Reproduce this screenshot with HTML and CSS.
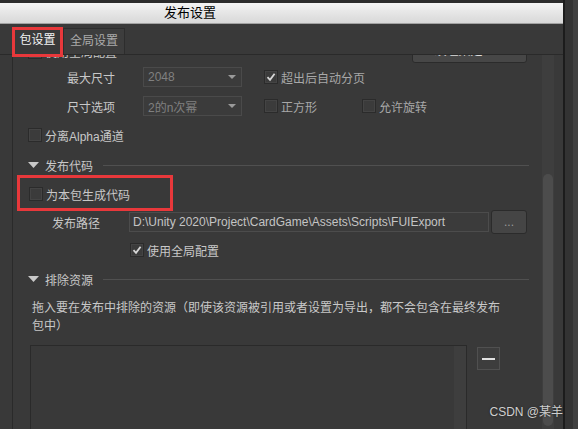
FILE: index.html
```html
<!DOCTYPE html>
<html lang="zh">
<head>
<meta charset="utf-8">
<title>发布设置</title>
<link rel="stylesheet" href="styles.css">
</head>
<body>
<div class="screen">
  <div class="window">
    <div class="topstrip"></div>
    <div class="titlebar"><span class="title">发布设置</span></div>
    <div class="tabs">
      <div class="tab active">包设置<span class="annot"></span></div>
      <div class="tab">全局设置</div>
    </div>
    <div class="panel">
      <div class="gutter"></div>
      <div class="content">
        <div class="inner">
          <div class="row row-a">
            <span class="cb"></span><span class="cbtext">使用全局配置</span>
            <div class="btn atlas">纹理集定义...</div>
          </div>
          <div class="row row-dd first">
            <span class="label">最大尺寸</span>
            <div class="dd"><span>2048</span><svg class="arrow" width="8" height="4" viewBox="0 0 8 4"><path d="M0 0H8L4 4Z" fill="#9a9a9a"/></svg></div>
            <span class="cb checked"><svg width="12" height="12" viewBox="0 0 12 12"><path d="M2.5 6.2L5 8.8L9.6 2.8" fill="none" stroke="#d6d6d6" stroke-width="1.8"/></svg></span><span class="cbtext dim">超出后自动分页</span>
          </div>
          <div class="row row-dd second">
            <span class="label">尺寸选项</span>
            <div class="dd"><span>2的n次幂</span><svg class="arrow" width="8" height="4" viewBox="0 0 8 4"><path d="M0 0H8L4 4Z" fill="#9a9a9a"/></svg></div>
            <span class="cb"></span><span class="cbtext dim w-square">正方形</span>
            <span class="cb"></span><span class="cbtext dim">允许旋转</span>
          </div>
          <div class="row row-alpha">
            <span class="cb"></span><span class="cbtext">分离Alpha通道</span>
          </div>
          <div class="row section s1">
            <svg class="tri" width="11" height="6" viewBox="0 0 11 6"><path d="M0 0H11L5.5 6Z" fill="#c8c8c8"/></svg>
            <span class="stitle">发布代码</span>
            <span class="sline"></span>
          </div>
          <div class="row row-gen">
            <span class="cb"></span><span class="cbtext">为本包生成代码</span>
            <span class="annot2"></span>
          </div>
          <div class="row row-path">
            <span class="label2">发布路径</span>
            <div class="input">D:\Unity 2020\Project\CardGame\Assets\Scripts\FUIExport</div>
            <div class="btn dots">...</div>
          </div>
          <div class="row row-global">
            <span class="cb checked"><svg width="12" height="12" viewBox="0 0 12 12"><path d="M2.5 6.2L5 8.8L9.6 2.8" fill="none" stroke="#d6d6d6" stroke-width="1.8"/></svg></span><span class="cbtext">使用全局配置</span>
          </div>
          <div class="row section s2">
            <svg class="tri" width="11" height="6" viewBox="0 0 11 6"><path d="M0 0H11L5.5 6Z" fill="#c8c8c8"/></svg>
            <span class="stitle">排除资源</span>
            <span class="sline"></span>
          </div>
          <p class="desc">拖入要在发布中排除的资源（即使该资源被引用或者设置为导出，都不会包含在最终发布包中）</p>
          <div class="row row-list">
            <div class="list"><div class="list-body"></div><div class="list-bar"></div></div>
            <div class="minus"><span></span></div>
          </div>
        </div>
      </div>
      <div class="vscroll"><div class="thumb"></div></div>
      <div class="rpad"></div>
    </div>
  </div>
  <div class="blackline"></div>
  <div class="outside"><div class="ostrip"></div></div>
</div>
<div class="watermark">CSDN @某羊</div>
</body>
</html>
```
FILE: styles.css
```css
* { box-sizing: border-box; margin: 0; padding: 0; }
html, body { width: 578px; height: 429px; overflow: hidden; }
body {
  background: #333;
  font-family: "Liberation Sans", "Noto Sans CJK SC", sans-serif;
  font-size: 12px;
  color: #c8c8c8;
  position: relative;
}
.screen { display: flex; height: 429px; }
.window { width: 563px; display: flex; flex-direction: column; background: #393939; }
.topstrip { height: 3px; background: #2b2b2b; }
.titlebar {
  height: 21px;
  background: linear-gradient(#f3f3f3, #d8d8d8);
  border-bottom: 1px solid #a2a2a2;
  padding-left: 164px;
  color: #000;
  font-size: 13px;
  line-height: 20px;
}
.tabs {
  height: 31px;
  background: #393939;
  border-bottom: 1px solid #2a2a2a;
  display: flex;
  align-items: flex-end;
  padding-left: 12px;
}
.tab {
  position: relative;
  height: 26px;
  width: 62px;
  text-align: center;
  line-height: 25px;
  background: #3d3d3d;
  border: 1px solid #2d2d2d;
  border-bottom: 0;
  color: #aaaaaa;
}
.tab.active {
  width: 51px;
  height: 27px;
  line-height: 27px;
  background: #393939;
  border: 0;
  color: #f2f2f2;
}
.annot {
  position: absolute;
  left: 0;
  top: 0;
  width: 51px;
  height: 30px;
  border: 3px solid #e8383b;
  z-index: 5;
}
.panel { display: flex; height: 374px; }
.gutter { width: 13px; border-right: 1px solid #2a2a2a; }
.content { width: 529px; overflow: hidden; }
.inner { margin-top: -15px; }
.vscroll { width: 12px; background: #3e3e3e; padding-top: 119px; padding-left: 1px; }
.thumb { width: 10px; height: 252px; background: #4c4c4c; border-radius: 5px; }
.rpad { width: 9px; }
.blackline { width: 2px; background: #1c1c1c; }
.outside { flex: 1; background: #333; display: flex; justify-content: flex-end; }
.ostrip { width: 5px; background: #404040; }

.row { display: flex; align-items: center; }
.cb {
  width: 14px; height: 14px;
  flex: none;
  background: #3b3b3b;
  border: 1px solid #2b2b2b;
  box-shadow: inset 0 0 0 1px #444;
  display: flex; align-items: center; justify-content: center;
  margin-right: 3px;
}
.cbtext { white-space: nowrap; }
.cbtext.dim { color: #a8a8a8; }
.row-a { height: 23px; padding-left: 15px; }
.btn {
  background: #474747;
  border: 1px solid #2b2b2b;
  border-radius: 3px;
  color: #dcdcdc;
  text-align: center;
}
.atlas { margin-left: auto; margin-right: 15px; width: 115px; height: 23px; line-height: 21px; }
.row-dd { height: 20px; padding-left: 54px; }
.row-dd.first { margin-top: 4px; }
.row-dd.second { margin-top: 9px; }
.label { width: 76px; }
.dd {
  width: 99px; height: 20px;
  background: #3b3b3b;
  border: 1px solid #4a4a4a;
  color: #808080;
  display: flex; align-items: center; justify-content: space-between;
  padding: 0 5px 0 4px;
  margin-right: 22px;
}
.w-square { width: 81px; }
.row-alpha { margin-top: 12px; height: 14px; padding-left: 15px; }
.section { height: 14px; padding-left: 15px; }
.s1 { margin-top: 16px; }
.s2 { margin-top: 15px; }
.tri { margin-right: 6px; flex: none; }
.stitle { white-space: nowrap; }
.sline { flex: 1; height: 1px; background: #505050; margin: 0 13px 0 10px; }
.row-gen { margin-top: 15px; height: 14px; padding-left: 16px; position: relative; }
.annot2 {
  position: absolute;
  left: 4px; top: -12px;
  width: 156px; height: 36px;
  border: 3px solid #e8383b;
}
.row-path { margin-top: 9px; height: 24px; padding-left: 39px; }
.label2 { width: 77px; }
.input {
  width: 360px; height: 20px;
  background: #3b3b3b;
  border: 1px solid #4c4c4c;
  color: #c4c4c4;
  padding-left: 3px;
  line-height: 18px;
  white-space: nowrap;
  overflow: hidden;
}
.dots { margin-left: 2px; width: 36px; height: 24px; line-height: 22px; color: #9a9a9a; background: #454545; }
.row-global { margin-top: 9px; height: 14px; padding-left: 117px; }
.desc { margin-top: 13px; margin-left: 19px; width: 475px; line-height: 18px; }
.row-list { margin-top: 10px; padding-left: 17px; align-items: flex-start; }
.list { width: 437px; height: 120px; border: 1px solid #2a2a2a; display: flex; }
.list-body { flex: 1; }
.list-bar { width: 12px; background: #3e3e3e; }
.minus {
  margin-left: 10px; margin-top: 2px;
  width: 23px; height: 23px;
  background: #3d3d3d;
  border: 1px solid #505050;
  display: flex; align-items: center; justify-content: center;
}
.minus span { width: 13px; height: 2px; background: #e0e0e0; }
.watermark {
  position: absolute;
  right: 15px; bottom: 10px;
  color: #cfcfcf;
  font-size: 12px;
  text-shadow: 0 0 2px #222;
}
```
